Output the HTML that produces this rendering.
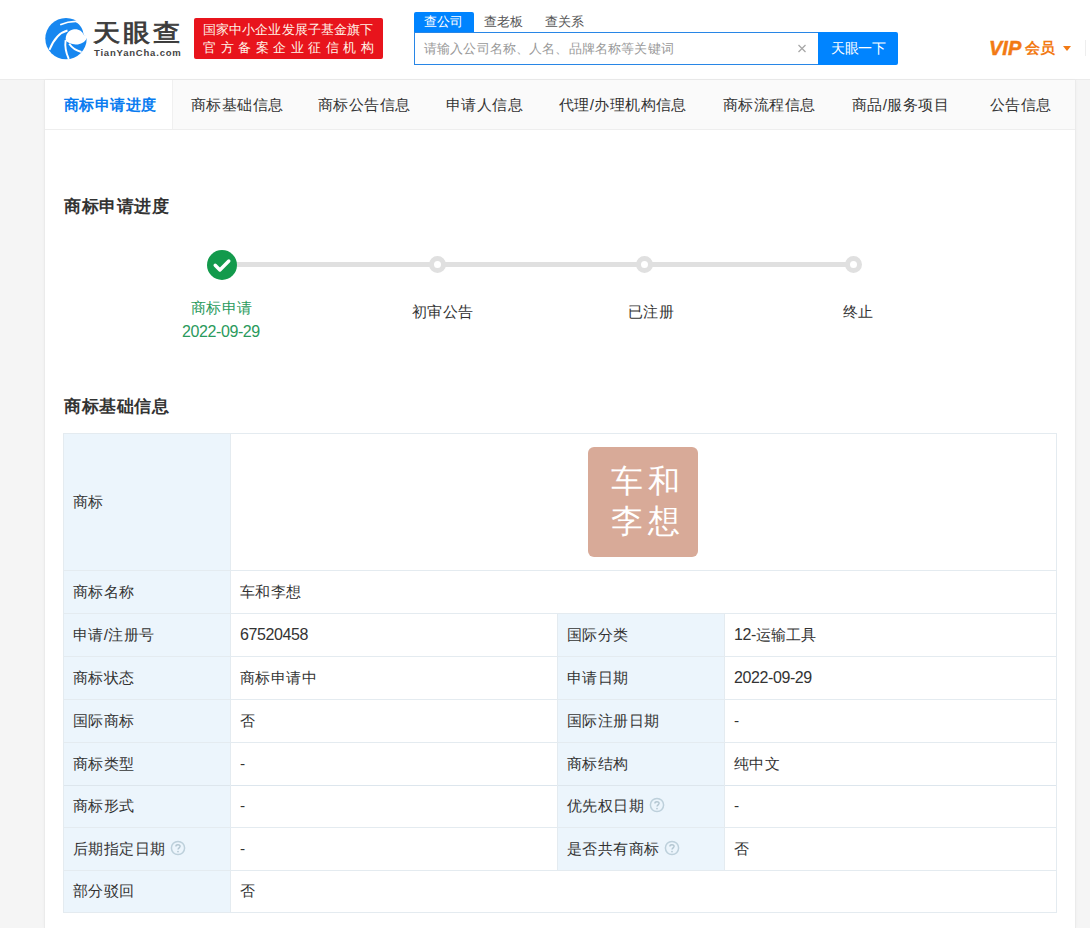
<!DOCTYPE html>
<html><head><meta charset="utf-8">
<style>
*{margin:0;padding:0;box-sizing:border-box}
html,body{width:1090px;height:928px;overflow:hidden;background:#f5f5f5;font-family:"Liberation Sans",sans-serif;color:#333}
.a{position:absolute;white-space:nowrap}
.tab{position:absolute;top:80px;height:49px;line-height:49px;font-size:15.4px;letter-spacing:0.4px;color:#333}
.title{font-size:17px;letter-spacing:0.5px;font-weight:bold;color:#333;line-height:20px}
.step{font-size:15.4px;letter-spacing:0.4px;line-height:18px}
.td{font-size:15.4px;letter-spacing:0.4px;color:#333}
.nd{letter-spacing:0}
.dg{font-size:16px;letter-spacing:-0.4px}
</style></head>
<body>
<div class="a" style="left:0;top:0;width:1090px;height:80px;background:#fff;border-bottom:1px solid #ebebeb"></div>
<svg class="a" style="left:43px;top:15px" width="47" height="47" viewBox="0 0 47 47">
<circle cx="23" cy="23.6" r="20.7" fill="#1787f0"/>
<path d="M33.5 5.6 C38.5 7.5 42.5 11.5 44.2 16.5 L44.6 22.5 L40.6 19.8 C40.3 14.5 37.5 9.8 33 7.2 Z" fill="#fff"/>
<path d="M22.8 25.8 C22 19.5 25.5 14.8 31 14.2 C36 13.8 39.5 16.2 40.6 19.8 L44.6 21.5 L44 23 C42 27.5 37 29.8 32.5 29.5 C28.5 29.2 24.5 27.6 22.8 25.8 Z" fill="#fff"/>
<path d="M6.4 34.8 C10.5 25 16 17.5 24.5 15.5" fill="none" stroke="#fff" stroke-width="2"/>
<path d="M17.2 9.8 C23 7.2 29 6.2 34 6.4" fill="none" stroke="#fff" stroke-width="1.7"/>
<path d="M25.8 44 C22.5 37 21.8 31 22.6 25.2" fill="none" stroke="#fff" stroke-width="1.9"/>
<path d="M26.2 28.8 C29 33 33.5 35.8 38.5 37" fill="none" stroke="#fff" stroke-width="1.9"/>
</svg>
<div class="a" style="left:93px;top:20px;font-size:27px;font-weight:normal;-webkit-text-stroke:0.9px #3b3b3b;color:#3b3b3b;line-height:30px;letter-spacing:2.9px;transform:scaleY(0.88);transform-origin:0 0">天眼查</div>
<div class="a" style="left:94px;top:48px;font-size:9.5px;font-weight:bold;color:#444;letter-spacing:0.8px;line-height:10px">TianYanCha.com</div>
<div class="a" style="left:194px;top:18px;width:189px;height:41px;background:#e8141c;border-radius:2px"></div>
<div class="a" style="left:203px;top:21.5px;font-size:13.2px;color:#fff3e8;line-height:16px;letter-spacing:0.1px;font-weight:500">国家中小企业发展子基金旗下</div>
<div class="a" style="left:203px;top:39.5px;font-size:13.2px;color:#fff3e8;line-height:16px;letter-spacing:4.5px;font-weight:500">官方备案企业征信机构</div>
<div class="a" style="left:414px;top:12px;width:60px;height:20px;background:#0084ff;border-radius:2px 2px 0 0"></div>
<div class="a" style="left:424px;top:12px;font-size:13px;color:#fff;line-height:20px">查公司</div>
<div class="a" style="left:484px;top:12px;font-size:13px;color:#555;line-height:20px">查老板</div>
<div class="a" style="left:545px;top:12px;font-size:13px;color:#555;line-height:20px">查关系</div>
<div class="a" style="left:414px;top:32px;width:405px;height:33px;border:1px solid #2886e6;border-right:none;background:#fff"></div>
<div class="a" style="left:424px;top:40px;font-size:13.2px;letter-spacing:0.15px;color:#999;line-height:18px">请输入公司名称、人名、品牌名称等关键词</div>
<svg class="a" style="left:797px;top:44px" width="10" height="9" viewBox="0 0 10 9"><path d="M1.5 1 L8.5 8 M8.5 1 L1.5 8" stroke="#a8a8a8" stroke-width="1.3"/></svg>
<div class="a" style="left:818px;top:32px;width:80px;height:33px;background:#0084ff;border-radius:0 2px 2px 0;color:#fff;font-size:14px;letter-spacing:-0.5px;line-height:33px;text-align:center">天眼一下</div>
<div class="a" style="left:989px;top:37px;font-size:20px;font-weight:bold;font-style:italic;color:#f27a14;-webkit-text-stroke:0.5px #f27a14;line-height:22px">VIP</div>
<div class="a" style="left:1025px;top:38px;font-size:15px;font-weight:bold;color:#f27a14;line-height:20px">会员</div>
<div class="a" style="left:1063px;top:46px;width:0;height:0;border-left:4.5px solid transparent;border-right:4.5px solid transparent;border-top:5px solid #f27a14"></div>
<div class="a" style="left:1085px;top:40px;width:1px;height:16px;background:#eee"></div>

<div class="a" style="left:44px;top:80px;width:1032px;height:848px;background:#fff;border-left:1px solid #ebebeb;border-right:1px solid #ebebeb;box-shadow:0 0 3px rgba(0,0,0,0.03)"></div>
<div class="a" style="left:45px;top:80px;width:1030px;height:50px;background:#fafafa;border-bottom:1px solid #eee"></div>
<div class="a" style="left:45px;top:80px;width:128px;height:49px;background:#fff;border-right:1px solid #f0f0f0"></div>
<div class="a tab" style="left:64px;color:#0a7cf0;font-weight:bold">商标申请进度</div>
<div class="a tab" style="left:191px">商标基础信息</div>
<div class="a tab" style="left:318px">商标公告信息</div>
<div class="a tab" style="left:446px">申请人信息</div>
<div class="a tab" style="left:559px">代理/办理机构信息</div>
<div class="a tab" style="left:723px">商标流程信息</div>
<div class="a tab" style="left:852px">商品/服务项目</div>
<div class="a tab" style="left:990px">公告信息</div>

<div class="a title" style="left:64px;top:197px">商标申请进度</div>
<div class="a" style="left:222px;top:262px;width:631px;height:5px;background:#e0e0e0"></div>
<div class="a" style="left:207px;top:250px;width:30px;height:30px;border-radius:50%;background:#139a4c"></div>
<svg class="a" style="left:207px;top:250px" width="30" height="30" viewBox="0 0 30 30"><path d="M8.2 15.3 L12.9 20 L21.8 11" fill="none" stroke="#fff" stroke-width="3.4" stroke-linecap="round" stroke-linejoin="round"/></svg>
<div class="a" style="left:429px;top:256px;width:17px;height:17px;border-radius:50%;background:#fff;border:5px solid #e0e0e0"></div>
<div class="a" style="left:636px;top:256px;width:17px;height:17px;border-radius:50%;background:#fff;border:5px solid #e0e0e0"></div>
<div class="a" style="left:845px;top:256px;width:17px;height:17px;border-radius:50%;background:#fff;border:5px solid #e0e0e0"></div>
<div class="a step" style="left:191px;top:299px;color:#2a9a5c">商标申请</div>
<div class="a step nd" style="left:182px;top:323px;color:#2a9a5c"><span class="dg">2022-09-29</span></div>
<div class="a step" style="left:412px;top:303px">初审公告</div>
<div class="a step" style="left:628px;top:303px">已注册</div>
<div class="a step" style="left:843px;top:303px">终止</div>

<div class="a title" style="left:64px;top:397px">商标基础信息</div>
<div class="a" style="left:63px;top:433px;width:994px;height:480px;background:#fff"></div>
<div class="a" style="left:63px;top:433px;width:167px;height:479px;background:#ecf5fc"></div>
<div class="a" style="left:557px;top:613px;width:167px;height:257px;background:#ecf5fc"></div>
<div class="a" style="left:63px;top:433px;width:994px;height:1px;background:#e4ebf0"></div>
<div class="a" style="left:63px;top:570px;width:994px;height:1px;background:#e4ebf0"></div>
<div class="a" style="left:63px;top:613px;width:994px;height:1px;background:#e4ebf0"></div>
<div class="a" style="left:63px;top:656px;width:994px;height:1px;background:#e4ebf0"></div>
<div class="a" style="left:63px;top:699px;width:994px;height:1px;background:#e4ebf0"></div>
<div class="a" style="left:63px;top:742px;width:994px;height:1px;background:#e4ebf0"></div>
<div class="a" style="left:63px;top:785px;width:994px;height:1px;background:#dde6ed"></div>
<div class="a" style="left:63px;top:827px;width:994px;height:1px;background:#e4ebf0"></div>
<div class="a" style="left:63px;top:870px;width:994px;height:1px;background:#e4ebf0"></div>
<div class="a" style="left:63px;top:912px;width:994px;height:1px;background:#e4ebf0"></div>
<div class="a" style="left:63px;top:433px;width:1px;height:480px;background:#e4ebf0"></div>
<div class="a" style="left:230px;top:433px;width:1px;height:480px;background:#e4ebf0"></div>
<div class="a" style="left:1056px;top:433px;width:1px;height:480px;background:#e4ebf0"></div>
<div class="a" style="left:557px;top:613px;width:1px;height:257px;background:#e4ebf0"></div>
<div class="a" style="left:724px;top:613px;width:1px;height:257px;background:#e4ebf0"></div>
<div class="a td" style="left:73px;top:433px;height:137px;line-height:137px">商标</div>
<div class="a td" style="left:73px;top:570px;height:43px;line-height:43px">商标名称</div>
<div class="a td" style="left:240px;top:570px;height:43px;line-height:43px">车和李想</div>
<div class="a td" style="left:73px;top:613px;height:43px;line-height:43px">申请/注册号</div>
<div class="a td nd" style="left:240px;top:613px;height:43px;line-height:43px"><span class="dg">67520458</span></div>
<div class="a td" style="left:567px;top:613px;height:43px;line-height:43px">国际分类</div>
<div class="a td nd" style="left:734px;top:613px;height:43px;line-height:43px"><span class="dg">12-</span>运输工具</div>
<div class="a td" style="left:73px;top:656px;height:43px;line-height:43px">商标状态</div>
<div class="a td" style="left:240px;top:656px;height:43px;line-height:43px">商标申请中</div>
<div class="a td" style="left:567px;top:656px;height:43px;line-height:43px">申请日期</div>
<div class="a td nd" style="left:734px;top:656px;height:43px;line-height:43px"><span class="dg">2022-09-29</span></div>
<div class="a td" style="left:73px;top:699px;height:43px;line-height:43px">国际商标</div>
<div class="a td" style="left:240px;top:699px;height:43px;line-height:43px">否</div>
<div class="a td" style="left:567px;top:699px;height:43px;line-height:43px">国际注册日期</div>
<div class="a td" style="left:734px;top:699px;height:43px;line-height:43px">-</div>
<div class="a td" style="left:73px;top:742px;height:43px;line-height:43px">商标类型</div>
<div class="a td" style="left:240px;top:742px;height:43px;line-height:43px">-</div>
<div class="a td" style="left:567px;top:742px;height:43px;line-height:43px">商标结构</div>
<div class="a td" style="left:734px;top:742px;height:43px;line-height:43px">纯中文</div>
<div class="a td" style="left:73px;top:785px;height:42px;line-height:42px">商标形式</div>
<div class="a td" style="left:240px;top:785px;height:42px;line-height:42px">-</div>
<div class="a td" style="left:567px;top:785px;height:42px;line-height:42px">优先权日期</div>
<div class="a td" style="left:734px;top:785px;height:42px;line-height:42px">-</div>
<div class="a td" style="left:73px;top:827px;height:43px;line-height:43px">后期指定日期</div>
<div class="a td" style="left:240px;top:827px;height:43px;line-height:43px">-</div>
<div class="a td" style="left:567px;top:827px;height:43px;line-height:43px">是否共有商标</div>
<div class="a td" style="left:734px;top:827px;height:43px;line-height:43px">否</div>
<div class="a td" style="left:73px;top:870px;height:42px;line-height:42px">部分驳回</div>
<div class="a td" style="left:240px;top:870px;height:42px;line-height:42px">否</div>
<svg class="a" style="left:170px;top:840px" width="16" height="16" viewBox="0 0 16 16"><circle cx="8" cy="8" r="6.6" fill="none" stroke="#bdd0db" stroke-width="1.5"/><path d="M5.9 6.4 C5.9 4.2 10.1 4.2 10.1 6.3 C10.1 7.8 8 7.9 8 9.6" fill="none" stroke="#b3c6d1" stroke-width="1.4"/><circle cx="8" cy="11.6" r="0.85" fill="#b3c6d1"/></svg>
<svg class="a" style="left:649px;top:797px" width="16" height="16" viewBox="0 0 16 16"><circle cx="8" cy="8" r="6.6" fill="none" stroke="#bdd0db" stroke-width="1.5"/><path d="M5.9 6.4 C5.9 4.2 10.1 4.2 10.1 6.3 C10.1 7.8 8 7.9 8 9.6" fill="none" stroke="#b3c6d1" stroke-width="1.4"/><circle cx="8" cy="11.6" r="0.85" fill="#b3c6d1"/></svg>
<svg class="a" style="left:664px;top:840px" width="16" height="16" viewBox="0 0 16 16"><circle cx="8" cy="8" r="6.6" fill="none" stroke="#bdd0db" stroke-width="1.5"/><path d="M5.9 6.4 C5.9 4.2 10.1 4.2 10.1 6.3 C10.1 7.8 8 7.9 8 9.6" fill="none" stroke="#b3c6d1" stroke-width="1.4"/><circle cx="8" cy="11.6" r="0.85" fill="#b3c6d1"/></svg>
<div class="a" style="left:588px;top:447px;width:110px;height:110px;background:#d8aa98;border-radius:6px"></div>
<div class="a" style="left:610.5px;top:461px;color:#fff;font-size:32px;line-height:40px;letter-spacing:5.7px">车和</div>
<div class="a" style="left:610.5px;top:501px;color:#fff;font-size:32px;line-height:40px;letter-spacing:5.7px">李想</div>
</body></html>
